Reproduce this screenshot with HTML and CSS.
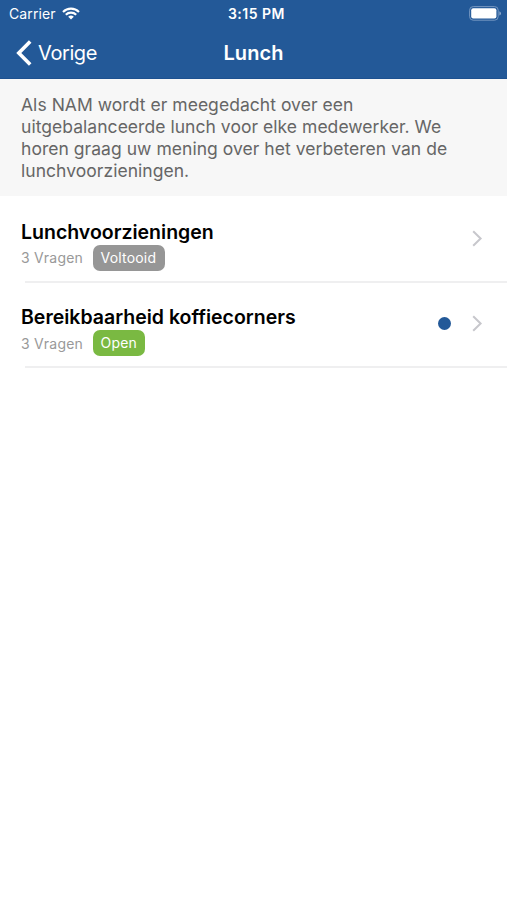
FILE: index.html
```html
<!DOCTYPE html>
<html lang="nl">
<head>
    <meta charset="UTF-8">
    <meta name="viewport" content="width=device-width, initial-scale=1.0">
    <title>Lunch</title>
    <link rel="stylesheet" href="styles.css">
</head>
<body>

    <header class="header">
        <div class="status-bar">
            <div class="carrier">
                <span class="carrier-name">Carrier</span>
                <svg class="wifi" width="18" height="13" viewBox="0 0 18 13" fill="none" stroke="#fff" stroke-width="2.1">
                    <path d="M1 4.9a11.3 11.3 0 0 1 16 0"/>
                    <path d="M3.8 7.8a7.4 7.4 0 0 1 10.4 0"/>
                    <path d="M9 12.6L6.2 9.8a4 4 0 0 1 5.6 0z" fill="#fff" stroke="none"/>
                </svg>
            </div>
            <span class="time">3:15 PM</span>
            <svg class="battery" width="33" height="15" viewBox="0 0 33 15">
                <rect x="0.6" y="0.6" width="28.6" height="13.6" rx="3.6" fill="none" stroke="#7597c1" stroke-width="1"/>
                <rect x="2.2" y="2.3" width="25.2" height="10.2" rx="2" fill="#fff"/>
                <path d="M30.4 5.2q1.6.7 1.6 2.2t-1.6 2.2z" fill="#93aed0"/>
            </svg>
        </div>
        <nav class="nav-bar">
            <a class="back" href="#">
                <svg width="16" height="26" viewBox="0 0 16 26" fill="none" stroke="#fff" stroke-width="3.6">
                    <path d="M14.2 1.6L2.8 13l11.4 11.4"/>
                </svg>
                <span class="back-label">Vorige</span>
            </a>
            <h1 class="nav-title">Lunch</h1>
        </nav>
    </header>

    <p class="intro">
        <span class="line">Als NAM wordt er meegedacht over een</span>
        <span class="line">uitgebalanceerde lunch voor elke medewerker. We</span>
        <span class="line">horen graag uw mening over het verbeteren van de</span>
        <span class="line">lunchvoorzieningen.</span>
    </p>

    <ul class="survey-list">
        <li class="survey">
            <div class="survey-text">
                <h2 class="survey-title">Lunchvoorzieningen</h2>
                <div class="survey-meta">
                    <span class="count">3 Vragen</span>
                    <span class="badge badge-done">Voltooid</span>
                </div>
            </div>
            <svg class="chevron" width="12" height="17" viewBox="0 0 12 17" fill="none" stroke="#c7c7cc" stroke-width="2">
                <path d="M2.2 1.2l7.4 7.3-7.4 7.3"/>
            </svg>
        </li>
        <li class="survey">
            <div class="survey-text">
                <h2 class="survey-title">Bereikbaarheid koffiecorners</h2>
                <div class="survey-meta">
                    <span class="count">3 Vragen</span>
                    <span class="badge badge-open">Open</span>
                </div>
            </div>
            <span class="dot"></span>
            <svg class="chevron" width="12" height="17" viewBox="0 0 12 17" fill="none" stroke="#c7c7cc" stroke-width="2">
                <path d="M2.2 1.2l7.4 7.3-7.4 7.3"/>
            </svg>
        </li>
    </ul>

</body>
</html>
```
FILE: styles.css
```css
* {
    box-sizing: border-box;
}

body {
    margin: 0;
    min-height: 900px;
    background-color: #fff;
    font-family: Inter, "Liberation Sans", sans-serif;
    color: #000;
}

.header {
    height: 79px;
    background-color: #235998;
    border-bottom: 1px solid #1d5190;
    color: #fff;
}

.status-bar {
    display: grid;
    grid-template-columns: 1fr auto 1fr;
    align-items: center;
    height: 27px;
    padding: 0 5px 0 9px;
}

.carrier {
    display: flex;
    align-items: center;
    gap: 6px;
}

.carrier-name {
    font-size: 14px;
    letter-spacing: 0.1px;
}

.time {
    padding-left: 2px;
    font-size: 14px;
    font-weight: 600;
    letter-spacing: 0.5px;
}

.battery {
    justify-self: end;
}

.nav-bar {
    display: grid;
    grid-template-columns: 1fr auto 1fr;
    align-items: center;
    height: 51px;
    padding: 0 16px;
}

.back {
    display: flex;
    align-items: center;
    gap: 6px;
    color: #fff;
    text-decoration: none;
}

.back-label {
    font-size: 20px;
    letter-spacing: -0.4px;
}

.nav-title {
    margin: 0;
    font-size: 20px;
    font-weight: 600;
    letter-spacing: 0.1px;
}

.intro {
    height: 117px;
    margin: 0;
    padding: 15px 21px 0;
    background-color: #f7f7f7;
    color: #666;
    font-size: 17.5px;
    line-height: 22px;
    letter-spacing: 0.04px;
}

.line {
    display: block;
    white-space: nowrap;
}

.survey-list {
    margin: 0;
    padding: 0;
    list-style: none;
}

/* rows overlap by 1px so the divider sits on the seam */
.survey {
    display: flex;
    align-items: center;
    height: 86.5px;
    margin-bottom: -1px;
    padding: 0 24px 2px 21px;
    background: linear-gradient(#efeff0, #efeff0) 25px 100% / 100% 2px no-repeat;
}

.survey-text {
    flex: 1;
    padding-top: 14px;
}

.survey-title {
    margin: 0;
    height: 25px;
    font-size: 19.5px;
    font-weight: 600;
    line-height: 25px;
}

.survey-meta {
    display: flex;
    align-items: center;
    gap: 10px;
    height: 26px;
}

.count {
    color: #999;
    font-size: 14px;
    letter-spacing: 0.2px;
}

.badge {
    height: 26px;
    padding: 0 7.5px;
    border-radius: 7px;
    color: #fff;
    font-size: 14px;
    line-height: 26px;
    letter-spacing: 0.2px;
}

.badge-done {
    width: 72px;
    background-color: #969696;
}

.badge-open {
    width: 52px;
    background-color: #7ab942;
}

.dot {
    width: 13px;
    height: 13px;
    margin-right: 20px;
    border-radius: 50%;
    background-color: #235998;
}
```
